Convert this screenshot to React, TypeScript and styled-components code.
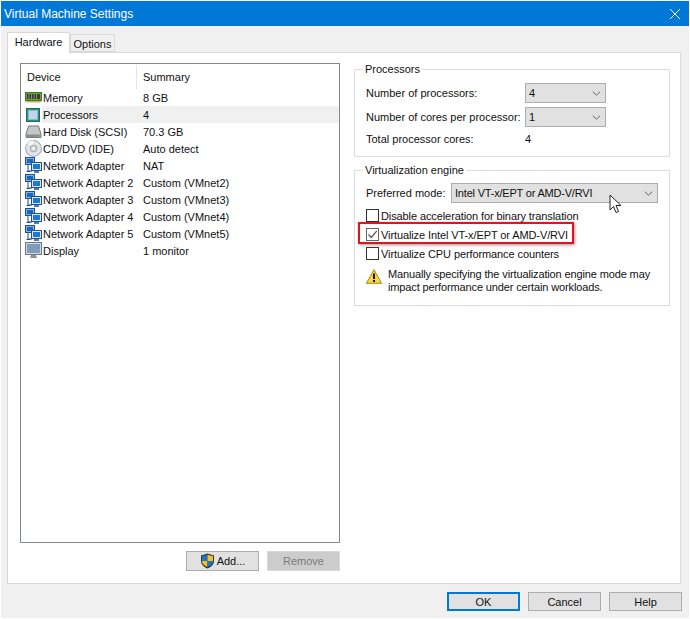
import React from "react";
import styled, { createGlobalStyle } from "styled-components";

const Global = createGlobalStyle`
  html, body { margin: 0; padding: 0; background: #fff; }
  * { box-sizing: border-box; }
`;

const Win = styled.div`
  width: 688px; height: 617px; margin: 1px;
  background: #f0f0f0; display: flex; flex-direction: column;
  font: 11px "Liberation Sans", Arial, sans-serif; color: #111; overflow: hidden;
`;
const TitleBar = styled.div`
  height: 25px; flex: none; background: #0078d7; color: #fff; font-size: 12px;
  display: flex; align-items: center; justify-content: space-between; padding: 0 8px 0 3px;
`;
const Tabs = styled.div`display: flex; align-items: flex-end; height: 26px; flex: none; padding-left: 6px;`;
const Tab = styled.div<{ $active?: boolean }>`
  height: ${p => (p.$active ? 21 : 18)}px; width: ${p => (p.$active ? 63 : 45)}px;
  margin-bottom: ${p => (p.$active ? -1 : 0)}px; background: ${p => (p.$active ? "#fff" : "#f0f0f0")};
  padding: ${p => (p.$active ? "0 0 2px" : "1px 0 0")};
  border: 1px solid #d9d9d9; border-bottom: ${p => (p.$active ? "none" : "1px solid #d9d9d9")};
  display: flex; align-items: center; justify-content: center; position: relative; z-index: 1;
`;
const Pane = styled.div`
  width: 674px; height: 532px; margin-left: 6px; flex: none; background: #fff; border: 1px solid #d9d9d9;
  display: flex; padding: 10px 10px 12px 12px; gap: 14px;
`;
const LeftCol = styled.div`width: 320px; flex: none; display: flex; flex-direction: column; gap: 8px;`;
const DeviceList = styled.div`flex: 1; border: 1px solid #828790; background: #fff; padding: 1px 0 0 0;`;
const HeaderRow = styled.div`display: flex; height: 24px; align-items: center;`;
const HCell = styled.div<{ $first?: boolean }>`
  width: ${p => (p.$first ? "116px" : "auto")}; height: 100%; display: flex; align-items: center;
  padding-left: 6px; border-right: ${p => (p.$first ? "1px solid #e5e5e5" : "none")};
`;
const Row = styled.div`display: flex; height: 17px; align-items: center;`;
const IconSlot = styled.div`width: 21px; height: 17px; flex: none; display: flex; align-items: center; justify-content: center; padding-left: 3px;`;
const RowBody = styled.div<{ $sel?: boolean }>`
  flex: 1; display: flex; height: 17px; align-items: center; padding-left: 1px;
  background: ${p => (p.$sel ? "#f0f0f0" : "transparent")};
`;
const NameCell = styled.div`width: 100px; white-space: nowrap;`;
const ListButtons = styled.div`display: flex; justify-content: flex-end; gap: 8px; height: 20px; flex: none;`;
const Btn = styled.div<{ $disabled?: boolean; $default?: boolean; $h?: number }>`
  width: 73px; height: ${p => p.$h ?? 20}px; display: flex; align-items: center; justify-content: center; gap: 2px;
  background: ${p => (p.$disabled ? "#cccccc" : "#e1e1e1")};
  color: ${p => (p.$disabled ? "#7a7a7a" : "#111")};
  border: ${p => (p.$default ? "2px solid #0078d7" : p.$disabled ? "1px solid #d9d9d9" : "1px solid #adadad")};
`;
const RightCol = styled.div`flex: 1; display: flex; flex-direction: column; gap: 7px;`;
const Group = styled.fieldset<{ $h: number; $pt: number }>`
  margin: 0; height: ${p => p.$h}px; border: 1px solid #dcdcdc; padding: ${p => p.$pt}px 0 0 11px; min-width: 0; position: relative;
  display: flex; flex-direction: column;
`;
const Legend = styled.legend`padding: 0 2px; margin-left: -3px; line-height: 13px;`;
const FormRow = styled.div<{ $h?: number; $gap?: number }>`
  display: flex; align-items: center; height: ${p => p.$h ?? 24}px; flex: none; margin-bottom: ${p => p.$gap ?? 0}px;
`;
const FormLabel = styled.div<{ $w: number }>`width: ${p => p.$w}px; flex: none; white-space: nowrap;`;
const Combo = styled.div<{ $w: number }>`
  width: ${p => p.$w}px; height: 20px; background: #e1e1e1; border: 1px solid #adadad; position: relative;
  display: flex; align-items: center; justify-content: space-between; padding: 0 4px 0 3px; letter-spacing: -.2px;
`;
const CheckRow = styled.div`display: flex; align-items: center; height: 19px; gap: 2px; position: relative; flex: none; white-space: nowrap; letter-spacing: -.1px;`;
const Box = styled.div<{ $checked?: boolean }>`
  width: 13px; height: 13px; border: 1px solid ${p => (p.$checked ? "#666" : "#333")}; background: #fff;
  display: flex; align-items: center; justify-content: center;
`;
const RedBox = styled.div`
  position: absolute; left: -8px; top: -3px; width: 216px; height: 22px; border: 2px solid #e0141c;
  box-shadow: 1px 1px 3px rgba(0,0,0,.4); pointer-events: none;
`;
const Cursor = styled.svg`position: absolute; left: 157px; top: 10px;`;
const Warn = styled.div`display: flex; gap: 6px; margin-top: 5px; line-height: 13px; letter-spacing: -.13px;`;
const Footer = styled.div`flex: 1; display: flex; justify-content: flex-end; align-items: flex-start; gap: 8px; padding: 8px 7px 0 0;`;

const Chevron = () => (
  <svg width="9" height="5" viewBox="0 0 11 6"><path d="M1 .8 5.500 5 10 .8" fill="none" stroke="#555" strokeWidth="1.100" /></svg>
);

const MemoryIcon = () => (
  <svg width="17" height="11" viewBox="0 0 17 11">
    <rect x=".5" y=".5" width="16" height="8" fill="#5fa83c" stroke="#3c7a2a" />
    <rect x="2" y="2" width="13" height="5" fill="#3b3b2f" />
    <path d="M4 2v5M6.500 2v5M9 2v5M11.500 2v5" stroke="#8c8c70" strokeWidth="1" />
    <path d="M1 9h15v1.500H1z" fill="#c9b35a" />
  </svg>
);
const CpuIcon = () => (
  <svg width="14" height="14" viewBox="0 0 14 14">
    <rect x=".5" y=".5" width="13" height="13" fill="#2f8f7a" stroke="#1f6f60" />
    <rect x="2.500" y="2.500" width="9" height="9" fill="#bcd6ee" stroke="#8fb3d3" />
  </svg>
);
const DiskIcon = () => (
  <svg width="17" height="14" viewBox="0 0 16 14">
    <path d="M3 1h10l2.500 8v3.500H.5V9z" fill="#c6c6c8" stroke="#77777a" strokeWidth="1" />
    <rect x="1" y="9.500" width="14" height="3" fill="#8b8b8e" />
    <rect x="11.500" y="10.500" width="2" height="1" fill="#5ddb5d" />
  </svg>
);
const CdIcon = () => (
  <svg width="17" height="17" viewBox="0 0 16 16">
    <circle cx="8" cy="8" r="7.500" fill="#dfe3e8" stroke="#a9acb2" />
    <path d="M8 8 2 3.500A7.500 7.500 0 0 1 8 .5z" fill="#f4f5f7" />
    <circle cx="8" cy="8" r="3" fill="#d0d3d8" stroke="#a9acb2" />
    <circle cx="8" cy="8" r="1.200" fill="#fff" />
  </svg>
);
const NetIcon = () => (
  <svg width="17" height="17" viewBox="0 0 17 17">
    <rect x=".5" y=".5" width="9" height="7" fill="#7fb3e6" stroke="#234f8f" />
    <rect x="2" y="2" width="6" height="4" fill="#1d66c0" />
    <path d="M3 8v6h4M1.500 14.500h4" fill="none" stroke="#234f8f" />
    <rect x="6.500" y="5.500" width="10" height="8" fill="#d7e8f8" stroke="#234f8f" />
    <rect x="8" y="7" width="7" height="5" fill="#1f78d6" />
    <rect x="9" y="14" width="5" height="2" fill="#4d7fb8" />
  </svg>
);
const DisplayIcon = () => (
  <svg width="17" height="17" viewBox="0 0 17 17">
    <rect x=".5" y=".5" width="16" height="12" fill="#d4d8de" stroke="#6f7681" />
    <rect x="2" y="2" width="13" height="9" fill="#7f9bbd" />
    <path d="M5 16h7l-1-3H6z" fill="#8c9099" />
  </svg>
);
const Shield = () => (
  <svg width="15" height="16" viewBox="0 0 15 16">
    <path d="M7.500.5 14 2.500V8c0 3.500-3 6-6.500 7.500C4 14 1 11.500 1 8V2.500z" fill="#333" />
    <path d="M7.500 1.800V8H2V3.300z" fill="#1b74d0" />
    <path d="M7.500 1.800 13 3.300V8H7.500z" fill="#f6c21c" />
    <path d="M2 8h5.500v6C4.500 12.800 2 11 2 8z" fill="#f6c21c" />
    <path d="M7.500 8H13c0 3-2.500 4.800-5.500 6z" fill="#1b74d0" />
  </svg>
);
const WarnIcon = () => (
  <svg width="16" height="15" viewBox="0 0 16 15" style={{ flex: "none", marginTop: 1 }}>
    <path d="M8 .7 15.500 14.300H.5z" fill="#fbd92e" stroke="#a8861a" strokeWidth="1" strokeLinejoin="round" />
    <rect x="7" y="4.500" width="2" height="5.500" fill="#111" />
    <rect x="7" y="11" width="2" height="2" fill="#111" />
  </svg>
);

const devices: [React.ReactNode, string, string][] = [
  [<MemoryIcon />, "Memory", "8 GB"],
  [<CpuIcon />, "Processors", "4"],
  [<DiskIcon />, "Hard Disk (SCSI)", "70.3 GB"],
  [<CdIcon />, "CD/DVD (IDE)", "Auto detect"],
  [<NetIcon />, "Network Adapter", "NAT"],
  [<NetIcon />, "Network Adapter 2", "Custom (VMnet2)"],
  [<NetIcon />, "Network Adapter 3", "Custom (VMnet3)"],
  [<NetIcon />, "Network Adapter 4", "Custom (VMnet4)"],
  [<NetIcon />, "Network Adapter 5", "Custom (VMnet5)"],
  [<DisplayIcon />, "Display", "1 monitor"],
];

export default function App() {
  return (
    <Win>
      <Global />
      <TitleBar>
        <span>Virtual Machine Settings</span>
        <svg width="12" height="12" viewBox="0 0 12 12"><path d="M1 1l10 10M11 1 1 11" stroke="#fff" strokeWidth="1" /></svg>
      </TitleBar>
      <Tabs>
        <Tab $active>Hardware</Tab>
        <Tab>Options</Tab>
      </Tabs>
      <Pane>
        <LeftCol>
          <DeviceList>
            <HeaderRow>
              <HCell $first>Device</HCell>
              <HCell>Summary</HCell>
            </HeaderRow>
            {devices.map(([icon, name, sum], i) => (
              <Row key={name}>
                <IconSlot>{icon}</IconSlot>
                <RowBody $sel={i === 1}>
                  <NameCell>{name}</NameCell>
                  <span>{sum}</span>
                </RowBody>
              </Row>
            ))}
          </DeviceList>
          <ListButtons>
            <Btn><Shield />Add...</Btn>
            <Btn $disabled>Remove</Btn>
          </ListButtons>
        </LeftCol>
        <RightCol>
          <Group $h={94} $pt={5}>
            <Legend>Processors</Legend>
            <FormRow><FormLabel $w={159}>Number of processors:</FormLabel><Combo $w={81}>4<Chevron /></Combo></FormRow>
            <FormRow><FormLabel $w={159}>Number of cores per processor:</FormLabel><Combo $w={81}>1<Chevron /></Combo></FormRow>
            <FormRow $h={20}><FormLabel $w={159}>Total processor cores:</FormLabel>4</FormRow>
          </Group>
          <Group $h={142} $pt={4}>
            <Legend>Virtualization engine</Legend>
            <FormRow $gap={1}>
              <FormLabel $w={85}>Preferred mode:</FormLabel>
              <Combo $w={207}>
                Intel VT-x/EPT or AMD-V/RVI<Chevron />
                <Cursor width="15" height="20" viewBox="0 0 15 20">
                  <path d="M1 1v15l3.500-3.500 2.500 6 2.500-1-2.500-6h5z" fill="#fff" stroke="#222" strokeWidth="1" />
                </Cursor>
              </Combo>
            </FormRow>
            <CheckRow><Box /><span>Disable acceleration for binary translation</span></CheckRow>
            <CheckRow>
              <Box $checked><svg width="11" height="11" viewBox="0 0 11 11"><path d="M1.500 5.500 4.300 8.500 9.800 1.800" fill="none" stroke="#555" strokeWidth="1.200" /></svg></Box>
              <span>Virtualize Intel VT-x/EPT or AMD-V/RVI</span>
              <RedBox />
            </CheckRow>
            <CheckRow><Box /><span>Virtualize CPU performance counters</span></CheckRow>
            <Warn><WarnIcon /><div>Manually specifying the virtualization engine mode may<br />impact performance under certain workloads.</div></Warn>
          </Group>
        </RightCol>
      </Pane>
      <Footer>
        <Btn $default $h={19}>OK</Btn>
        <Btn $h={19}>Cancel</Btn>
        <Btn $h={19}>Help</Btn>
      </Footer>
    </Win>
  );
}
